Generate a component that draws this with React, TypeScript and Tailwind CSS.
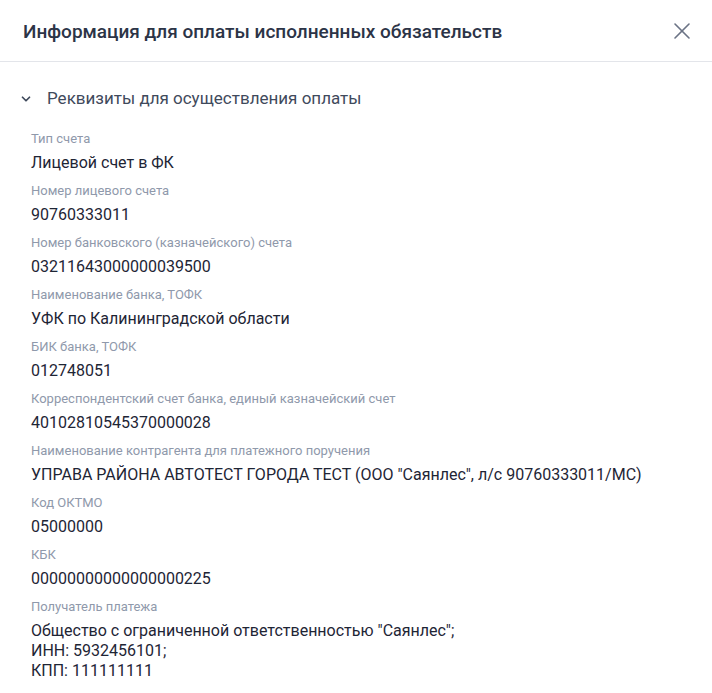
import React from "react";
import { X, ChevronDown } from "lucide-react";

type Field = {
  label: string;
  value: string[];
};

const fields: Field[] = [
  { label: "Тип счета", value: ["Лицевой счет в ФК"] },
  { label: "Номер лицевого счета", value: ["90760333011"] },
  { label: "Номер банковского (казначейского) счета", value: ["03211643000000039500"] },
  { label: "Наименование банка, ТОФК", value: ["УФК по Калининградской области"] },
  { label: "БИК банка, ТОФК", value: ["012748051"] },
  { label: "Корреспондентский счет банка, единый казначейский счет", value: ["40102810545370000028"] },
  {
    label: "Наименование контрагента для платежного поручения",
    value: ['УПРАВА РАЙОНА АВТОТЕСТ ГОРОДА ТЕСТ (ООО "Саянлес", л/с 90760333011/МС)'],
  },
  { label: "Код ОКТМО", value: ["05000000"] },
  { label: "КБК", value: ["00000000000000000225"] },
  {
    label: "Получатель платежа",
    value: [
      'Общество с ограниченной ответственностью "Саянлес";',
      "ИНН: 5932456101;",
      "КПП: 111111111",
    ],
  },
];

export default function App() {
  return (
    <div
      className="w-[712px] h-[693px] bg-white overflow-hidden"
      style={{ fontFamily: "Roboto, 'Liberation Sans', sans-serif" }}
    >
      {/* шапка */}
      <div className="h-[62px] pt-[3px] flex items-center justify-between pl-[23px] pr-[16px] border-b border-[#e3e5ea]">
        <h1 className="text-[19px] font-medium text-[#2c3447]">
          Информация для оплаты исполненных обязательств
        </h1>
        <button className="text-[#6b7385] -mt-[3px]">
          <X className="w-[28px] h-[28px]" strokeWidth={1.4} />
        </button>
      </div>

      <div className="pt-[24px]">
        <div className="flex items-center h-[24px] pl-[19px] mt-[1px]">
          <ChevronDown className="w-[14px] h-[14px] text-[#3f4a5c]" strokeWidth={3} />
          <span className="ml-[14px] text-[17px] text-[#3f4a5c]">
            Реквизиты для осуществления оплаты
          </span>
        </div>

        <div className="pl-[31px] pt-[18px] flex flex-col gap-[8px]">
          {fields.map((f) => (
            <div key={f.label}>
              <div className="text-[13px] leading-[20px] text-[#8f99ab]">{f.label}</div>
              <div className="mt-[4px] text-[16px] leading-[20px] text-[#1e2535]">
                {f.value.map((line) => (
                  <div key={line}>{line}</div>
                ))}
              </div>
            </div>
          ))}
        </div>
      </div>
    </div>
  );
}
